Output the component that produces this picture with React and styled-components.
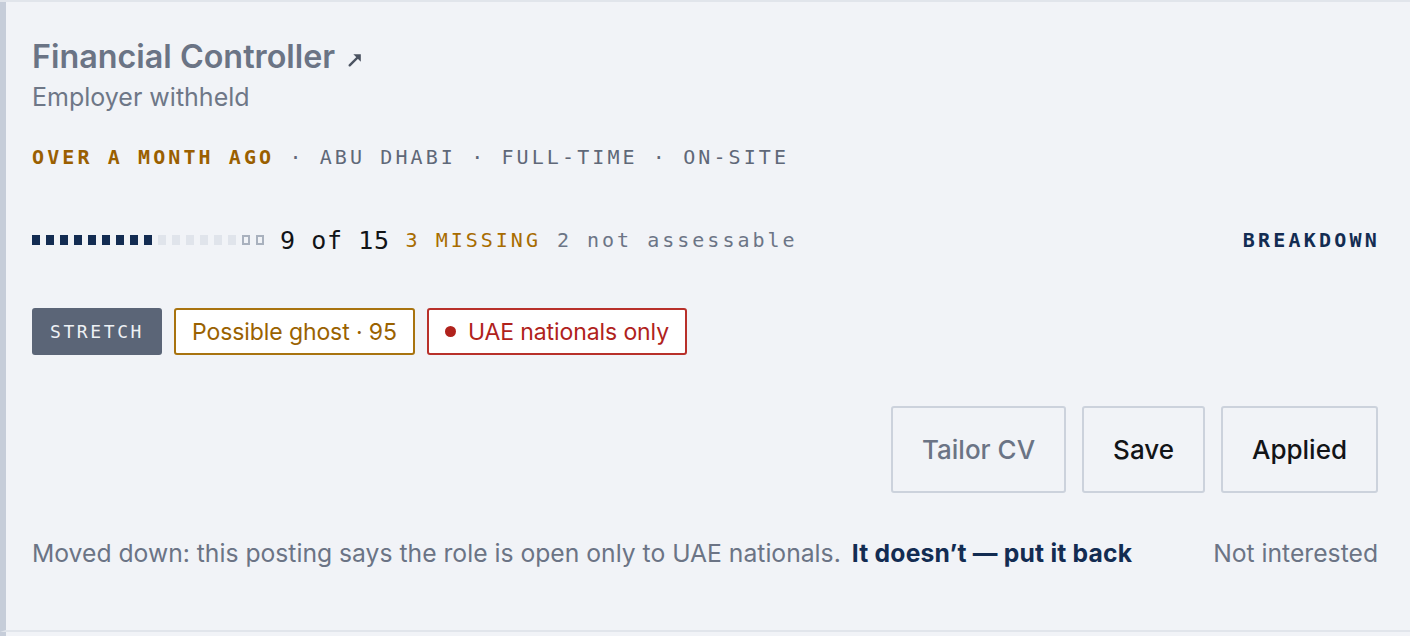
import React from 'react'
import styled, { createGlobalStyle } from 'styled-components'

const GlobalStyle = createGlobalStyle`
  html, body {
    margin: 0;
    padding: 0;
    background: #f1f3f7;
  }
  body {
    font-family: Inter, "Open Sans", sans-serif;
    overflow: hidden;
  }
`;

const SANS = `Inter, "Open Sans", sans-serif`;
const MONO = `"DejaVu Sans Mono", "Liberation Mono", monospace`;

const job = {
  title: "Financial Controller",
  employer: "Employer withheld",
  posted: "Over a month ago",
  meta: ["Abu Dhabi", "Full-time", "On-site"],
  met: 9,
  total: 15,
  missing: 3,
  unassessable: 2,
};

// small "opens elsewhere" arrow next to the title
const ExternalArrow = () => (
  <svg width="17" height="17" viewBox="0 0 16 16" aria-hidden="true">
    <path d="M2.5 13.5 L11 5" stroke="currentColor" strokeWidth="2.2" strokeLinecap="round" />
    <path d="M6 3 H13 V10 Z" fill="currentColor" />
  </svg>
);

export default function App() {
  const cells = [];
  for (let i = 0; i < job.total + job.unassessable; i++) {
    cells.push(i < job.met ? 'met' : i < job.total ? 'open' : 'na');
  }
  return (
    <>
      <GlobalStyle />
      <List>
        <Card>
          <Title>
            {job.title}
            <Arrow><ExternalArrow /></Arrow>
          </Title>
          <Employer>{job.employer}</Employer>

          <Meta>
            <Posted>{job.posted}</Posted>
            {job.meta.map((m) => (
              <span key={m}> · {m}</span>
            ))}
          </Meta>

          <ScoreRow>
            <Cells>
              {cells.map((c, i) => (
                <Cell key={i} $kind={c} />
              ))}
            </Cells>
            <Score>{job.met} of {job.total}</Score>
            <Note $tone="warn">{job.missing} MISSING</Note>
            <Note>{job.unassessable} not assessable</Note>
            <Breakdown>Breakdown</Breakdown>
          </ScoreRow>

          <Tags>
            <Stretch>Stretch</Stretch>
            <Tag $color="#9a6200" $border="#a8730f">Possible ghost · 95</Tag>
            <Tag $color="#b0221c" $border="#b8302a">
              <Dot />UAE nationals only
            </Tag>
          </Tags>

          <Actions>
            <ActionButton $muted>Tailor CV</ActionButton>
            <ActionButton>Save</ActionButton>
            <ActionButton>Applied</ActionButton>
          </Actions>

          <Footer>
            <Reason>
              Moved down: this posting says the role is open only to UAE nationals.
              <Undo>It doesn’t — put it back</Undo>
            </Reason>
            <Dismiss>Not interested</Dismiss>
          </Footer>
        </Card>
        <Card />
      </List>
    </>
  )
}

const List = styled.div`
  border-top: 2px solid #e1e5eb;
  display: flex;
  flex-direction: column;
`;

const Card = styled.div`
  background: #f1f3f7;
  border-left: 6px solid #c6cdd9;
  border-bottom: 2px solid #e1e5eb;
  padding: 35px 32px 0 26px;
  height: 630px;
  box-sizing: border-box;
  &:last-child{
    border-bottom: none;
  }
`;

const Title = styled.h2`
  margin: 0;
  display: flex;
  align-items: center;
  gap: 12px;
  font-family: ${SANS};
  font-size: 32.3px;
  font-weight: 600;
  color: #6b7485;
  line-height: 40px;
`;

const Arrow = styled.span`
  display: inline-flex;
  margin-top: 5px;
  color: #4b5361;
`;

const Employer = styled.div`
  margin-top: 3px;
  font-family: ${SANS};
  font-size: 25px;
  color: #6e7787;
  line-height: 34px;
`;

const Meta = styled.div`
  margin-top: 30px;
  font-family: ${MONO};
  font-size: 20px;
  letter-spacing: 3.1px;
  text-transform: uppercase;
  color: #5f6878;
  line-height: 26px;
`;

const Posted = styled.span`
  color: #9a5f00;
  font-weight: 700;
`;

const ScoreRow = styled.div`
  margin-top: 55px;
  display: flex;
  align-items: center;
  gap: 16px;
  height: 30px;
`;

const Cells = styled.div`
  display: flex;
  gap: 6px;
`;

const Cell = styled.span`
  width: 8px;
  height: 10px;
  box-sizing: border-box;
  background: ${(p) => (p.$kind === 'met' ? '#132c52' : p.$kind === 'open' ? '#e0e4eb' : 'transparent')};
  border: ${(p) => (p.$kind === 'na' ? '2px solid #a9b1be' : 'none')};
`;

const Score = styled.span`
  font-family: ${MONO};
  font-size: 25px;
  letter-spacing: 0.6px;
  color: #121417;
`;

const Note = styled.span`
  font-family: ${MONO};
  font-size: 20px;
  letter-spacing: 3px;
  color: ${(p) => (p.$tone === 'warn' ? '#a86c00' : '#6c7586')};
`;

const Breakdown = styled.button`
  margin-left: auto;
  margin-right: -2px;
  border: none;
  background: none;
  padding: 0;
  font-family: ${MONO};
  font-size: 20px;
  font-weight: 700;
  letter-spacing: 3.2px;
  text-transform: uppercase;
  color: #132c52;
  cursor: pointer;
`;

const Tags = styled.div`
  margin-top: 53px;
  display: flex;
  gap: 12px;
`;

const Stretch = styled.span`
  display: inline-flex;
  align-items: center;
  height: 47px;
  padding: 0 18px;
  box-sizing: border-box;
  border-radius: 3px;
  background: #5b6577;
  color: #eef1f5;
  font-family: ${MONO};
  font-size: 18px;
  letter-spacing: 2.6px;
  text-transform: uppercase;
`;

const Tag = styled.span`
  display: inline-flex;
  align-items: center;
  gap: 12px;
  height: 47px;
  padding: 0 16px;
  box-sizing: border-box;
  border: 2px solid ${(p) => p.$border};
  border-radius: 3px;
  background: #ffffff;
  color: ${(p) => p.$color};
  font-family: ${SANS};
  font-size: 23px;
  letter-spacing: -0.1px;
`;

const Dot = styled.span`
  width: 11px;
  height: 11px;
  border-radius: 50%;
  background: currentColor;
  display: inline-block;
`;

const Actions = styled.div`
  margin-top: 51px;
  display: flex;
  justify-content: flex-end;
  gap: 16px;
`;

const ActionButton = styled.button`
  height: 87px;
  padding: 0 29px;
  border: 2px solid #ccd2dc;
  border-radius: 3px;
  background: transparent;
  font-family: ${SANS};
  font-size: 26px;
  font-weight: 500;
  color: ${(p) => (p.$muted ? '#6b7485' : '#121417')};
  cursor: pointer;
`;

const Footer = styled.div`
  margin-top: 45px;
  display: flex;
  align-items: baseline;
  justify-content: space-between;
  font-family: ${SANS};
  font-size: 24.7px;
  line-height: 30px;
`;

const Reason = styled.span`
  color: #6b7485;
`;

const Undo = styled.a`
  margin-left: 11px;
  color: #132c52;
  font-weight: 700;
  letter-spacing: 0.2px;
  cursor: pointer;
`;

const Dismiss = styled.span`
  color: #6b7485;
`;
